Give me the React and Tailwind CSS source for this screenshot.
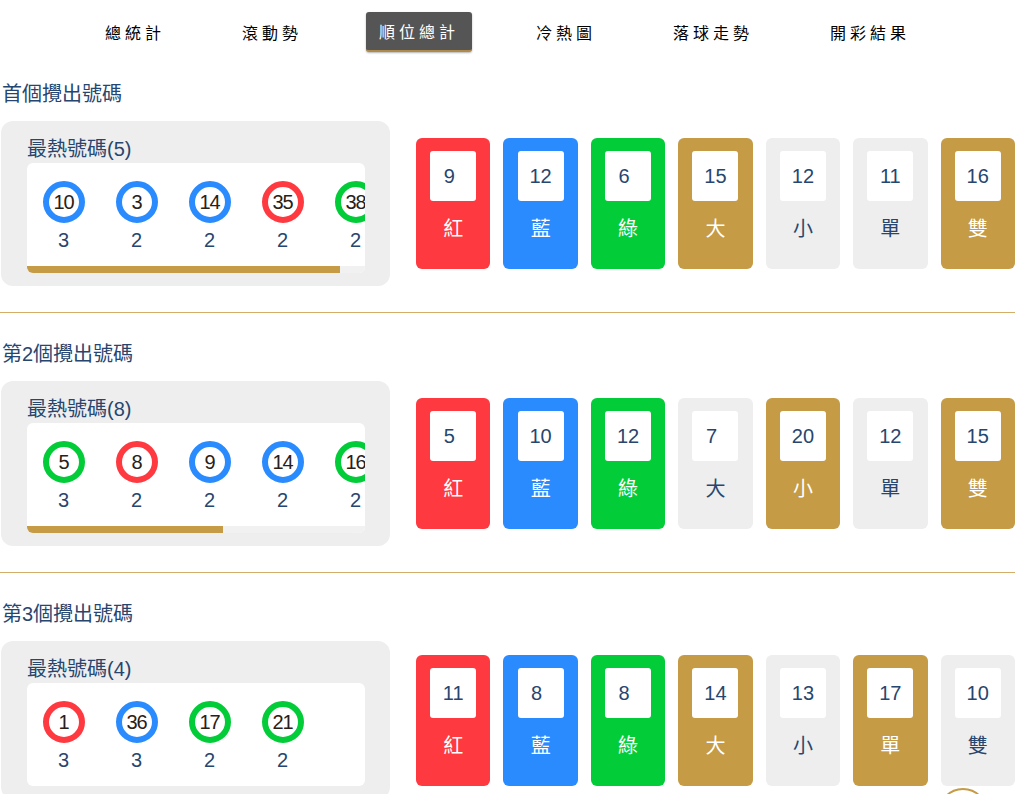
import React from "react";

const FONT = "font-['Liberation_Sans','Noto_Sans_CJK_TC',sans-serif]";

/* 導覽列 */
const NAV = ["總統計", "滾動勢", "順位總計", "冷熱圖", "落球走勢", "開彩結果"];

/* 球的顏色 */
const RING = {
  r: "border-[#fe3a40]",
  b: "border-[#2a8bff]",
  g: "border-[#02cc38]",
};

/* 每一格的底色 */
const CARD = {
  r: "bg-[#fe3a40] text-white",
  b: "bg-[#2a8bff] text-white",
  g: "bg-[#02cc38] text-white",
  y: "bg-[#c59b46] text-white",
  n: "bg-[#eeeeee] text-[#27466f]",
};

const BOX_W = 338; // 白色捲動區寬度
const BALL_W = 73;

const SECTIONS = [
  {
    title: "首個攪出號碼",
    hot: [
      [10, "b", 3],
      [3, "b", 2],
      [14, "b", 2],
      [35, "r", 2],
      [38, "g", 2],
    ],
    cards: [
      [9, "紅", "r"],
      [12, "藍", "b"],
      [6, "綠", "g"],
      [15, "大", "y"],
      [12, "小", "n"],
      [11, "單", "n"],
      [16, "雙", "y"],
    ],
  },
  {
    title: "第2個攪出號碼",
    hot: [
      [5, "g", 3],
      [8, "r", 2],
      [9, "b", 2],
      [14, "b", 2],
      [16, "g", 2],
      [19, "r", 2],
      [24, "r", 2],
      [30, "b", 2],
    ],
    cards: [
      [5, "紅", "r"],
      [10, "藍", "b"],
      [12, "綠", "g"],
      [7, "大", "n"],
      [20, "小", "y"],
      [12, "單", "n"],
      [15, "雙", "y"],
    ],
  },
  {
    title: "第3個攪出號碼",
    hot: [
      [1, "r", 3],
      [36, "b", 3],
      [17, "g", 2],
      [21, "g", 2],
    ],
    cards: [
      [11, "紅", "r"],
      [8, "藍", "b"],
      [8, "綠", "g"],
      [14, "大", "y"],
      [13, "小", "n"],
      [17, "單", "y"],
      [10, "雙", "n"],
    ],
  },
];

function Ball({ num, color, times }) {
  return (
    <div className="w-[73px] shrink-0 flex flex-col items-center">
      <div
        className={`w-[42px] h-[42px] rounded-full border-[6px] ${RING[color]} flex items-center justify-center text-[20px] leading-none tracking-[-1px] text-[#2a2016]`}
      >
        {num}
      </div>
      <div className="mt-[5px] text-[20px] leading-[24px] text-[#27466f]">{times}</div>
    </div>
  );
}

function HotBox({ hot }) {
  const total = hot.length * BALL_W;
  const scroll = total > BOX_W;
  return (
    <div className="ml-px w-[389px] shrink-0 rounded-[12px] bg-[#eeeeee] pl-[26px] pr-[25px] pt-[16px] pb-[13px]">
      <div className="text-[20px] leading-[24px] text-[#27466f]">最熱號碼({hot.length})</div>
      <div className="mt-[2px] rounded-[6px] bg-white overflow-hidden">
        <div className="flex pt-[18px] pb-[14px]">
          {hot.map(([n, c, t], i) => (
            <Ball key={i} num={n} color={c} times={t} />
          ))}
        </div>
        {scroll && (
          <div className="h-[7px] bg-[#f1f1f1]">
            <div className="h-full bg-[#c59b46]" style={{ width: Math.round((BOX_W * BOX_W) / total) }} />
          </div>
        )}
      </div>
    </div>
  );
}

function Card({ num, label, tone }) {
  return (
    <div className={`flex-1 rounded-[6px] pt-[13px] pb-[28px] flex flex-col items-center ${CARD[tone]}`}>
      <div className="w-[46px] h-[50px] rounded-[3px] bg-white flex items-center justify-center text-[20px] text-[#27466f]">
        <span className={num < 10 ? "mr-[8px]" : ""}>{num}</span>
      </div>
      <div className="mt-[16px] text-[20px] leading-[24px]">{label}</div>
    </div>
  );
}

function Section({ data }) {
  return (
    <section className="pt-[29px] pb-[26px] border-b border-[#d4ae68]">
      <h2 className="pl-[2px] text-[20px] leading-[24px] font-normal text-[#27466f]">{data.title}</h2>
      <div className="mt-[15px] flex items-center">
        <HotBox hot={data.hot} />
        <div className="ml-[26px] flex-1 flex gap-[13px]">
          {data.cards.map(([n, l, t], i) => (
            <Card key={i} num={n} label={l} tone={t} />
          ))}
        </div>
      </div>
    </section>
  );
}

export default function App() {
  return (
    <div className={`w-[1015px] bg-white ${FONT}`}>
      {/* 上方選單 */}
      <nav className="h-[53px] pt-[12px] flex justify-center gap-[51px]">
        {NAV.map((t) => {
          const active = t === "順位總計";
          return (
            <div
              key={t}
              className={`h-[40px] px-[13px] flex items-center text-[16px] tracking-[4px] font-['Noto_Sans_CJK_TC',sans-serif] ${
                active
                  ? "bg-[#555555] text-white rounded-[3px] border-b-2 border-[#b08a4a] shadow-[0_1px_2px_rgba(0,0,0,0.3)]"
                  : "text-black"
              }`}
            >
              {t}
            </div>
          );
        })}
      </nav>

      {SECTIONS.map((s, i) => (
        <Section key={i} data={s} />
      ))}

      {/* 回到頂端按鈕 */}
      <div className="fixed left-[938px] top-[788px] w-[50px] h-[50px] rounded-full border-2 border-[#c59b46] bg-white" />
    </div>
  );
}
